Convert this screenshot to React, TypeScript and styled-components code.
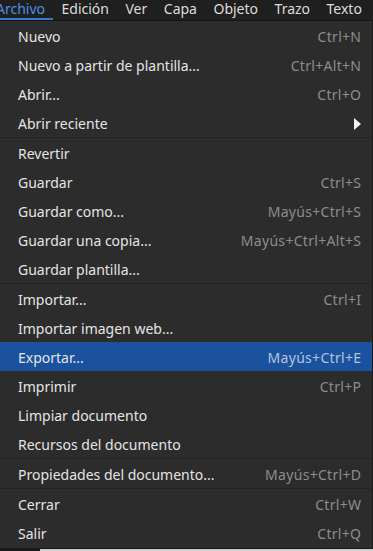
import styled, { createGlobalStyle } from 'styled-components'

const GlobalStyle = createGlobalStyle`
  html, body {
    margin: 0;
    padding: 0;
    background: #1e1e1e;
    overflow: hidden;
  }
  body {
    font-family: 'Noto Sans', 'Open Sans', sans-serif;
    -webkit-font-smoothing: antialiased;
  }
`

type Entry =
  | { kind: 'item'; label: string; shortcut?: string; submenu?: boolean; active?: boolean }
  | { kind: 'sep' }

const menuBar = ['Archivo', 'Edición', 'Ver', 'Capa', 'Objeto', 'Trazo', 'Texto']

const entries: Entry[] = [
  { kind: 'item', label: 'Nuevo', shortcut: 'Ctrl+N' },
  { kind: 'item', label: 'Nuevo a partir de plantilla...', shortcut: 'Ctrl+Alt+N' },
  { kind: 'item', label: 'Abrir...', shortcut: 'Ctrl+O' },
  { kind: 'item', label: 'Abrir reciente', submenu: true },
  { kind: 'sep' },
  { kind: 'item', label: 'Revertir' },
  { kind: 'item', label: 'Guardar', shortcut: 'Ctrl+S' },
  { kind: 'item', label: 'Guardar como...', shortcut: 'Mayús+Ctrl+S' },
  { kind: 'item', label: 'Guardar una copia...', shortcut: 'Mayús+Ctrl+Alt+S' },
  { kind: 'item', label: 'Guardar plantilla...' },
  { kind: 'sep' },
  { kind: 'item', label: 'Importar...', shortcut: 'Ctrl+I' },
  { kind: 'item', label: 'Importar imagen web...' },
  { kind: 'item', label: 'Exportar...', shortcut: 'Mayús+Ctrl+E', active: true },
  { kind: 'item', label: 'Imprimir', shortcut: 'Ctrl+P' },
  { kind: 'item', label: 'Limpiar documento' },
  { kind: 'item', label: 'Recursos del documento' },
  { kind: 'sep' },
  { kind: 'item', label: 'Propiedades del documento...', shortcut: 'Mayús+Ctrl+D' },
  { kind: 'sep' },
  { kind: 'item', label: 'Cerrar', shortcut: 'Ctrl+W' },
  { kind: 'item', label: 'Salir', shortcut: 'Ctrl+Q' },
]

const Screen = styled.div`
  width: 373px;
  height: 551px;
  display: flex;
  flex-direction: column;
  background: #1e1e1e;
  overflow: hidden;
`

const Bar = styled.div`
  height: 20px;
  flex-shrink: 0;
  display: flex;
  align-items: stretch;
  margin-left: -12px;
  background: #1f1f1f;
`

const BarItem = styled.div<{ $open?: boolean }>`
  display: flex;
  align-items: center;
  padding: 0 8px;
  margin-right: 0.5px;
  font-size: 14px;
  line-height: 18px;
  color: ${({ $open }) => ($open ? '#4d8fe0' : '#dcdcdc')};
  border-bottom: 2px solid ${({ $open }) => ($open ? '#3a78cc' : 'transparent')};
`

const Panel = styled.div`
  width: 372px;
  flex-shrink: 0;
  display: flex;
  flex-direction: column;
  background: #2c2c2c;
  border-top: 1px solid #151515;
  border-right: 1px solid #1a1a1a;
  padding-bottom: 1px;
`

const Row = styled.div<{ $active?: boolean }>`
  height: 29px;
  display: flex;
  align-items: center;
  justify-content: space-between;
  padding: 2px 11px 0 18px;
  box-sizing: border-box;
  font-size: 14px;
  background: ${({ $active }) => ($active ? '#1a52a0' : 'transparent')};
`

const Label = styled.span`
  color: #e4e4e4;
`

const Shortcut = styled.span<{ $active?: boolean }>`
  color: ${({ $active }) => ($active ? '#b4c4dc' : '#8c8c8c')};
  letter-spacing: 0.3px;
  margin-right: -0.3px;
`

const Separator = styled.div`
  height: 1px;
  background: #232323;
`

const Footer = styled.div`
  flex: 1;
  display: flex;
  align-items: flex-end;
  background: #1a1a1a;
`

const FooterStrip = styled.div`
  margin-left: 40px;
  flex: 1;
  height: 2px;
  background: #cfcfcf;
`

const Arrow = () => (
  <svg width="7" height="12" viewBox="0 0 7 12">
    <path d="M0 0 L7 6 L0 12 Z" fill="#f2f2f2" />
  </svg>
)

export default function App() {
  return (
    <Screen>
      <GlobalStyle />
      <Bar>
        {menuBar.map((m, i) => (
          <BarItem key={m} $open={i === 0}>
            {m}
          </BarItem>
        ))}
      </Bar>
      <Panel>
        {entries.map((e, i) =>
          e.kind === 'sep' ? (
            <Separator key={i} />
          ) : (
            <Row key={i} $active={e.active}>
              <Label>{e.label}</Label>
              {e.submenu ? <Arrow /> : e.shortcut && <Shortcut $active={e.active}>{e.shortcut}</Shortcut>}
            </Row>
          )
        )}
      </Panel>
      <Footer>
        <FooterStrip />
      </Footer>
    </Screen>
  )
}
